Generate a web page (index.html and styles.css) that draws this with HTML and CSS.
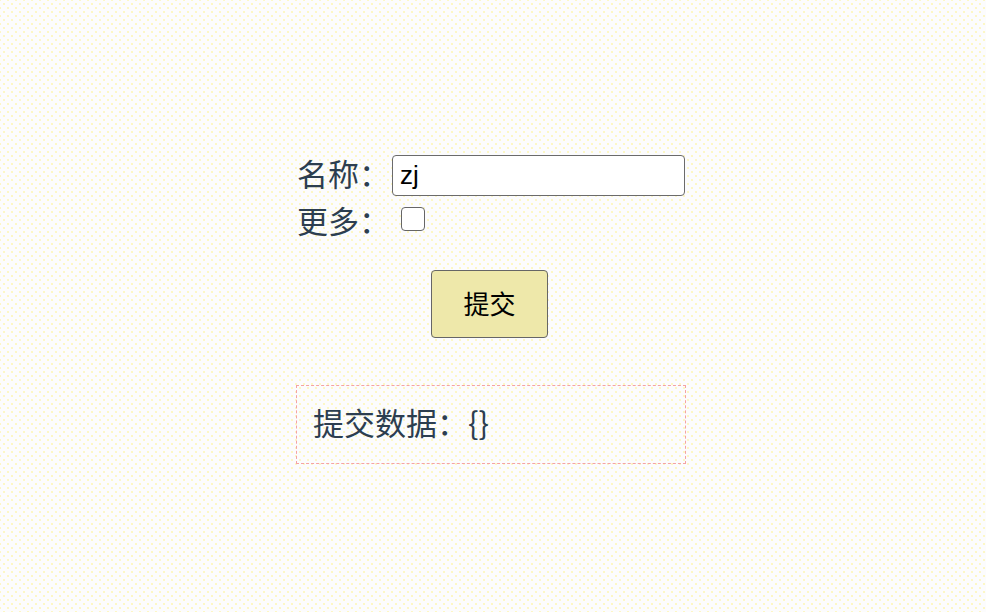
FILE: index.html
```html
<!DOCTYPE html>
<html lang="zh-CN">
  <head>
    <meta charset="UTF-8" />
    <meta name="viewport" content="width=device-width, initial-scale=1.0" />
    <title>表单</title>
    <link rel="stylesheet" href="styles.css">
  </head>
  <body>
    <div id="app">
      <form class="form">
        <div class="form-row">
          <label for="name">名称：</label>
          <input type="text" id="name" class="text-input" value="zj" />
        </div>
        <div class="form-row row-more">
          <label for="more">更多：</label>
          <input type="checkbox" id="more" class="check" />
        </div>
        <div class="actions">
          <button type="button" class="submit-button">提交</button>
        </div>
      </form>
      <div class="result">提交数据：{}</div>
    </div>
  </body>
</html>
```

FILE: styles.css
```css
body {
  margin: 0;
  padding: 0;
  background-color: #fcfcfd;
  background-image: radial-gradient(circle, #fff38a 0.5px, transparent 0.9px),
    radial-gradient(circle, #fff38a 0.5px, transparent 0.9px);
  background-size: 8px 8px;
  background-position: 0 0, 4px 4px;
  font-family: "Noto Sans CJK SC", "Liberation Sans", sans-serif;
  color: #2c3e50;
}
#app {
  width: 390px;
  margin-left: 296px;
  padding-top: 154px;
}
.form-row {
  display: flex;
  align-items: center;
  height: 42px;
  font-size: 31px;
}
.form-row label {
  width: 96px;
  padding-left: 1px;
  margin-top: -6px;
  box-sizing: border-box;
  white-space: nowrap;
}
.row-more {
  height: 46px;
}
.row-more label {
  margin-top: 0;
}
.text-input {
  width: 293px;
  height: 41px;
  box-sizing: border-box;
  margin: 0;
  padding: 0 7px;
  border: 1px solid #6b6b6b;
  border-radius: 4px;
  background-color: white;
  color: black;
  font-family: "Liberation Sans", sans-serif;
  font-size: 26px;
  outline: none;
}
.check {
  appearance: none;
  width: 24px;
  height: 24px;
  margin: 0 0 0 9px;
  border: 1.5px solid #666;
  border-radius: 4px;
  background-color: white;
}
.actions {
  display: flex;
  justify-content: center;
  padding-top: 28px;
}
.submit-button {
  width: 117px;
  height: 68px;
  margin-right: 3px;
  padding: 0 0 4px;
  background-color: #eee8aa;
  border: 1.5px solid #666;
  border-radius: 4px;
  color: black;
  font-family: "Noto Sans CJK SC", sans-serif;
  font-size: 26px;
  cursor: pointer;
}
.result {
  margin-top: 47px;
  height: 79px;
  box-sizing: border-box;
  padding: 0 0 6px 16px;
  display: flex;
  align-items: center;
  border: 1px dashed #f5a3a3;
  font-size: 31px;
}
```
